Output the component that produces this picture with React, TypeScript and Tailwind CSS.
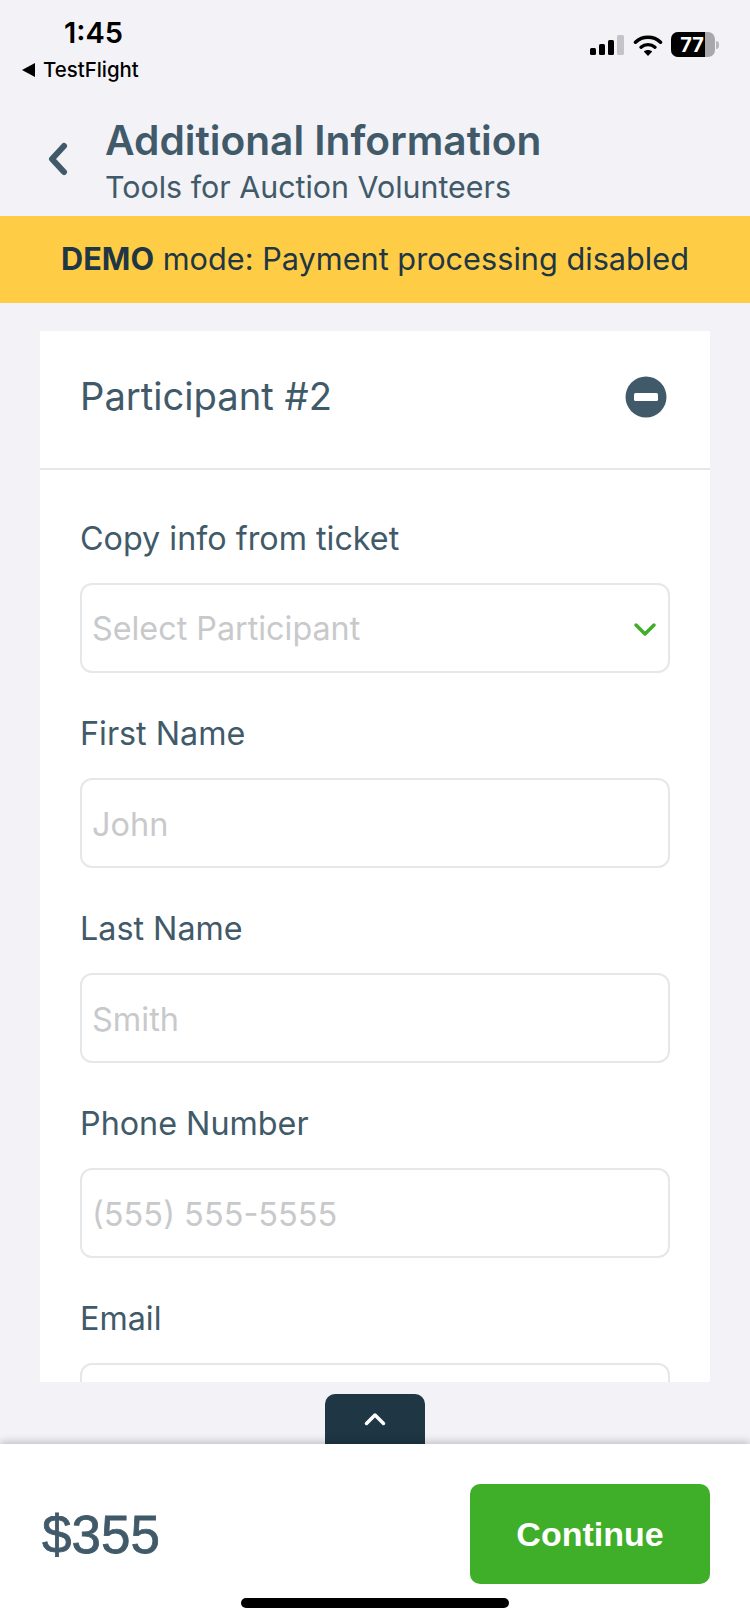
const SANS = "font-['Inter',sans-serif]";

/** Signal, wifi and battery cluster in the iOS status bar. */
function StatusIcons() {
  return (
    <div className="flex items-center">
      <svg width="34" height="20" viewBox="0 0 34 20" className="mr-[9px]">
        <rect x="0" y="13" width="6" height="7" rx="1.5" fill="#000" />
        <rect x="9" y="9" width="6" height="11" rx="1.5" fill="#000" />
        <rect x="18" y="5" width="6" height="15" rx="1.5" fill="#000" />
        <rect x="27" y="0" width="7" height="20" rx="1.5" fill="#c4c4c8" />
      </svg>
      <svg width="30" height="22" viewBox="0 0 30 22" className="mr-[8px]">
        <path d="M2.5 8.2C9.5 1.6 20.5 1.6 27.5 8.2" fill="none" stroke="#000" strokeWidth="3.6" strokeLinecap="round" />
        <path d="M8 13.2C11.9 9.7 18.100 9.700 22 13.200" fill="none" stroke="#000" strokeWidth="3.4" strokeLinecap="round" />
        <path d="M15 22L10.800 17.400C13.200 15.400 16.800 15.400 19.200 17.400Z" fill="#000" />
      </svg>
      <div className="flex items-center">
        <div className="flex h-[25px] w-[44px] overflow-hidden rounded-[7px] bg-[#a8a8ac]">
          <div className={`flex w-[34px] items-center justify-end bg-black pr-[1px] text-[20px] font-bold leading-none text-white ${SANS}`}>
            77
          </div>
        </div>
        <div className="ml-[1px] h-[8px] w-[3px] rounded-r-full bg-[#b8b8bc]" />
      </div>
    </div>
  );
}

function StatusBar() {
  return (
    <div className={`flex h-[92px] shrink-0 justify-between pl-[22px] pr-[31px] text-black ${SANS}`}>
      <div>
        <div className="ml-[42px] mt-[17px] text-[29px] font-semibold leading-[32px]">1:45</div>
        <div className="mt-[10px] flex items-center text-[20.400px] font-medium leading-[22px]">
          <svg width="13" height="14" viewBox="0 0 13 14" className="mr-[8px]">
            <path d="M13 0V14L0 7Z" fill="#000" />
          </svg>
          TestFlight
        </div>
      </div>
      <div className="mt-[32px] self-start">
        <StatusIcons />
      </div>
    </div>
  );
}

function Field({ label, placeholder }: { label: string; placeholder: string }) {
  return (
    <div className="mb-[42px] shrink-0">
      <div className="mb-[25px] text-[32.300px] leading-[38px] text-[#415a69]">{label}</div>
      <input
        type="text"
        placeholder={placeholder}
        className="h-[90px] w-full rounded-[12px] border-2 border-[#e6e7e9] bg-white px-[10px] pt-[2px] text-[32.500px] outline-none placeholder:text-[#c8c9cb]"
      />
    </div>
  );
}

export default function App() {
  return (
    <div className={`flex h-[1624px] w-[750px] flex-col overflow-hidden bg-[#f2f2f7] ${SANS}`}>
      <StatusBar />

      <header className="flex h-[124px] shrink-0 items-center pl-[47px]">
        <svg width="22" height="34" viewBox="0 0 22 34" className="mt-[10px] mr-[36px] shrink-0">
          <path d="M17 4L5 17L17 30" fill="none" stroke="#415a69" strokeWidth="6" strokeLinecap="round" strokeLinejoin="round" />
        </svg>
        <div className="mt-[15px]">
          <div className="text-[40.700px] font-semibold leading-[46px] text-[#415a69]">Additional Information</div>
          <div className="mt-[4px] text-[30.400px] leading-[38px] text-[#415a69]">Tools for Auction Volunteers</div>
        </div>
      </header>

      <div className="flex h-[87px] shrink-0 items-center justify-center bg-[#ffcd45] text-[30.700px] text-[#1f3644]">
        <span>
          <b className="font-bold">DEMO</b> mode: Payment processing disabled
        </span>
      </div>

      <main className="flex min-h-0 flex-1 flex-col items-center pt-[28px]">
        <section className="min-h-0 w-[670px] flex-1 overflow-hidden bg-white">
          <div className="flex h-[139px] items-center justify-between border-b-2 border-[#e6e7e9] pb-[6px] pl-[40px] pr-[43px]">
            <span className="text-[38.200px] text-[#415a69]">Participant #2</span>
            <svg width="42" height="42" viewBox="0 0 42 42">
              <circle cx="21" cy="21" r="20.500" fill="#415a69" />
              <rect x="9" y="17" width="24" height="8" rx="1.500" fill="#fff" />
            </svg>
          </div>
          <div className="px-[40px] pt-[50px]">
            <div className="mb-[42px]">
              <div className="mb-[25px] text-[32.300px] leading-[38px] text-[#415a69]">Copy info from ticket</div>
              <div className="flex h-[90px] items-center justify-between rounded-[12px] border-2 border-[#e6e7e9] pl-[10px] pr-[11px] pt-[3px] text-[32.300px] text-[#c8c9cb]">
                Select Participant
                <svg width="24" height="16" viewBox="0 0 24 16">
                  <path d="M3 3L12 12L21 3" fill="none" stroke="#3fae29" strokeWidth="3.500" strokeLinecap="round" strokeLinejoin="round" />
                </svg>
              </div>
            </div>
            <Field label="First Name" placeholder="John" />
            <Field label="Last Name" placeholder="Smith" />
            <Field label="Phone Number" placeholder="(555) 555-5555" />
            <Field label="Email" placeholder="" />
          </div>
        </section>
        <button type="button" className="mt-[12px] flex h-[50px] w-[100px] shrink-0 items-start justify-center rounded-t-[10px] bg-[#1f3644] pt-[18px]">
          <svg width="22" height="14" viewBox="0 0 22 14">
            <path d="M2.500 11.500L11 3L19.500 11.500" fill="none" stroke="#fff" strokeWidth="3.500" strokeLinecap="round" strokeLinejoin="round" />
          </svg>
        </button>
      </main>

      <footer className="relative flex h-[180px] shrink-0 flex-col bg-white pl-[42px] pr-[40px] pt-[40px] shadow-[0_-2px_8px_rgba(0,0,0,0.22)]">
        <div className="flex items-center justify-between">
          <span className="font-['Liberation_Sans',sans-serif] text-[53px] font-normal leading-none text-[#415a69] [-webkit-text-stroke:0.8px_#415a69]">$355</span>
          <button type="button" className="h-[100px] w-[240px] rounded-[10px] bg-[#3fae29] font-['Liberation_Sans',sans-serif] text-[34px] font-bold text-white">
            Continue
          </button>
        </div>
        <div className="mx-auto mt-[14px] h-[10px] w-[268px] -translate-x-[1px] rounded-full bg-black" />
      </footer>
    </div>
  );
}
